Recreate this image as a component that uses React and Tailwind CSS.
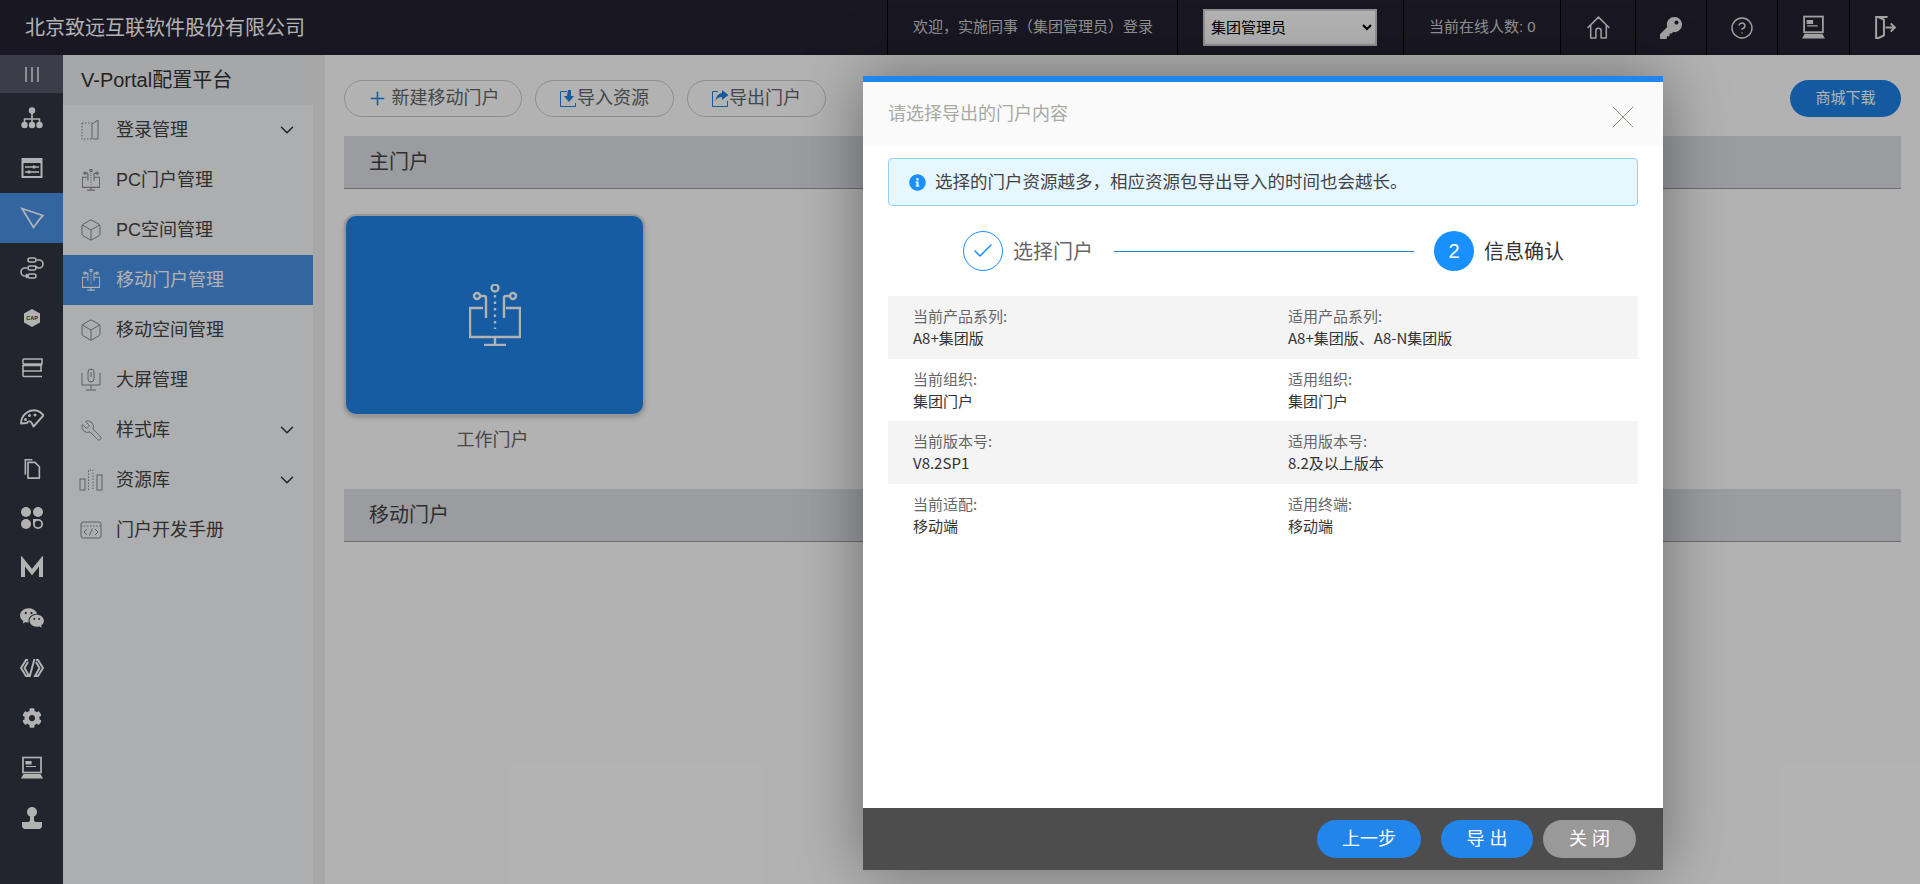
import { Box, ChevronDown, CircleHelp, Check, Plus, Wrench, X } from 'lucide-react'
import { FaCog, FaInfoCircle, FaKey } from 'react-icons/fa'
import { RiWechatFill } from 'react-icons/ri'

const Svg = ({ size = 24, className = '', children, ...rest }) => (
  <svg width={size} height={size} viewBox="0 0 24 24" fill="none" stroke="currentColor" strokeWidth="1.6" className={className} {...rest}>
    {children}
  </svg>
)

const OrgIcon = () => (
  <Svg>
    <circle cx="12" cy="4.5" r="3.2" fill="currentColor" stroke="none" />
    <path d="M12 7v6M4.5 16v-3h15v3M12 13v3" />
    <circle cx="4.5" cy="19" r="3.2" fill="currentColor" stroke="none" />
    <circle cx="12" cy="19" r="3.2" fill="currentColor" stroke="none" />
    <circle cx="19.5" cy="19" r="3.2" fill="currentColor" stroke="none" />
  </Svg>
)

const SliderIcon = () => (
  <Svg>
    <rect x="1.5" y="2" width="21" height="20" fill="currentColor" stroke="none" />
    <rect x="3.5" y="7" width="17" height="13" fill="#313643" stroke="none" />
    <path d="M5 11h14M5 16h14" strokeWidth="1.4" />
    <path d="M14 9.5v3M9 14.5v3" strokeWidth="2.4" />
  </Svg>
)

const PlaneIcon = () => (
  <Svg strokeWidth="1.8">
    <path d="M2 2.5 23 9.500 20.500 12 13.500 21.500z" strokeLinejoin="miter" />
  </Svg>
)

const FlowIcon = () => (
  <Svg>
    <rect x="8" y="2" width="8" height="4" rx="2" />
    <rect x="8" y="10" width="8" height="4" rx="2" />
    <rect x="8" y="18" width="8" height="4" rx="2" />
    <path d="M17 4h2a3.500 3.500 0 0 1 0 8h-1M15 10l3 2M7 12H5a3.500 3.500 0 0 0 0 8h2M6 18l2 2-2 2" />
  </Svg>
)

const CapIcon = () => (
  <Svg>
    <path d="M12 3 20 7.500v9L12 21l-8-4.500v-9z" fill="currentColor" stroke="none" />
    <text x="12" y="14" textAnchor="middle" fontSize="5.500" fontWeight="700" fill="#313643" stroke="none" fontFamily="Liberation Sans">CAP</text>
  </Svg>
)

const BooksIcon = () => (
  <Svg strokeWidth="1.500">
    <path d="M4 3h18v5H4C2.500 8 2.500 3 4 3zM2 9.500h20M3 9.500V15h18V9.500M2 15h20M4 15.500c-1.500 0-1.500 5 0 5h18" />
  </Svg>
)

const GaugeIcon = () => (
  <Svg>
    <path d="M1 17.500C1 9 9 3 16 4.500c3 .6 5.500 2 7.500 5L13.500 20.500 12 17.500c-.5-2.500-4-3-5-.5z" strokeWidth="1.900" strokeLinejoin="round" />
    <circle cx="5.500" cy="13.500" r="1.500" fill="currentColor" stroke="none" />
    <circle cx="9.500" cy="9.500" r="1.500" fill="currentColor" stroke="none" />
    <circle cx="15" cy="9" r="1.500" fill="currentColor" stroke="none" />
  </Svg>
)

const FilesIcon = () => (
  <Svg size={21} strokeWidth="1.900">
    <path d="M5 19V2h8" />
    <path d="M8 5h8l5 5v13H8z" strokeLinejoin="round" />
  </Svg>
)

const CloverIcon = () => (
  <Svg>
    <rect x="1" y="1" width="10" height="10" rx="5" fill="currentColor" stroke="none" />
    <rect x="13" y="1" width="10" height="10" rx="5" fill="currentColor" stroke="none" />
    <rect x="1" y="13" width="10" height="10" rx="5" fill="currentColor" stroke="none" />
    <path d="M13 13h5a5 5 0 1 1-5 5z" fill="currentColor" stroke="none" />
    <circle cx="18" cy="18" r="3.200" fill="#313643" stroke="none" />
  </Svg>
)

const MarkIcon = () => (
  <Svg strokeWidth="4">
    <path d="M3 21V5l9 11 9-11v16" strokeLinejoin="miter" />
  </Svg>
)

const CodeIcon = () => (
  <Svg strokeWidth="2">
    <path d="M8 4H6L1 12l5 8h3l-4.500-8L8 6M16 4h2l5 8-5 8h-3l4.500-8L16 6M14.500 3 9.500 21" />
  </Svg>
)

const LaptopIcon = ({ size = 24 }) => (
  <Svg size={size}>
    <rect x="3" y="1.500" width="18" height="15" strokeWidth="1.700" />
    <path d="M6 5.500h5v2.500H6zM6 10.500h10" fill="currentColor" strokeWidth="1.200" />
    <path d="M3.500 18h17L23 22.500H1z" fill="currentColor" stroke="none" />
  </Svg>
)

const StampIcon = () => (
  <Svg>
    <circle cx="12" cy="6" r="5" fill="currentColor" stroke="none" />
    <path d="M10 9h4v5c0 1 1 2 2 2h6v5l-2 2H4l-2-2v-5h6c1 0 2-1 2-2z" fill="currentColor" stroke="none" />
  </Svg>
)

const HomeIcon = () => (
  <Svg size={25} strokeWidth="1.500">
    <path d="M1.500 12.500 12 2l10.500 10.500M4.500 10v12h5v-7c0-3 5-3 5 0v7h5V10" strokeLinejoin="round" />
  </Svg>
)

const ExitIcon = () => (
  <Svg size={25} strokeWidth="1.900">
    <path d="M14 2H3v20h2.500l5-2.500V4.500L5 2M17 8l4 4-4 4M12 12h9" />
  </Svg>
)

const PortalIcon = ({ size = 18, strokeWidth = 1.600 }) => (
  <svg width={size} height={size * 62 / 52} viewBox="0 0 52 62" fill="none" stroke="currentColor" strokeWidth={strokeWidth * 2}>
    <circle cx="26" cy="4" r="3.500" />
    <circle cx="8" cy="12" r="3" />
    <circle cx="44" cy="12" r="3" />
    <path d="M26 11v34" strokeDasharray="2.500 4" />
    <path d="M11 12h4a2 2 0 0 1 2 2v20M41 12h-4a2 2 0 0 0-2 2v20" />
    <path d="M14 24H1v29h50V24H37M26 53v8M15 61h22" />
  </svg>
)

const DoorIcon = () => (
  <Svg strokeWidth="1">
    <path d="M3 5h10M3 5v16h10" strokeDasharray="1.500 1.500" />
    <path d="M14 21h5V2l-6 4v15" />
  </Svg>
)

const MicIcon = () => (
  <Svg strokeWidth="1">
    <rect x="9" y="1" width="6" height="13" rx="3" />
    <path d="M12 4v5M3 5v12h18V5M12 17v5M7 22h10" />
  </Svg>
)

const BarsIcon = () => (
  <svg width="24" height="24" viewBox="0 0 24 24" fill="none" stroke="currentColor" strokeWidth="1">
    <rect x="1" y="11" width="5" height="11" />
    <path d="M9.500 22V2h4.500v20" strokeDasharray="1.500 1.500" />
    <rect x="18" y="7" width="5" height="15" />
  </svg>
)

const CodeWindowIcon = () => (
  <Svg strokeWidth="1">
    <rect x="2" y="4" width="20" height="16" rx="2" />
    <path d="M2 8h20" strokeDasharray="1.500 1.500" />
    <path d="m8 11-3 3 3 3M16 11l3 3-3 3M13.500 10.500l-3 7" />
  </Svg>
)

const ImportIcon = () => (
  <svg width="17" height="17" viewBox="0 0 17 17" fill="none" className="text-[#1e82e5]">
    <path d="M7 1.500H.500v15h15V13" stroke="currentColor" />
    <path d="M10 0h3v6h3l-5 6-5-6h3z" transform="translate(-2 0)" fill="currentColor" />
  </svg>
)

const ExportIcon = () => (
  <svg width="17" height="17" viewBox="0 0 17 17" fill="none" className="text-[#1e82e5]">
    <path d="M6 1.500H.500v15h15V11" stroke="currentColor" />
    <path d="M10 0l6.500 5-6.500 5V7C7 7 5 8 3.500 11 4 6.500 6.500 3.500 10 3z" fill="currentColor" />
  </svg>
)

const CubeIcon = () => <Box size={24} strokeWidth={1} />

const RAIL = [
  { icon: OrgIcon },
  { icon: SliderIcon },
  { icon: PlaneIcon, active: true },
  { icon: FlowIcon },
  { icon: CapIcon },
  { icon: BooksIcon },
  { icon: GaugeIcon },
  { icon: FilesIcon },
  { icon: CloverIcon },
  { icon: MarkIcon },
  { icon: () => <RiWechatFill size={26} /> },
  { icon: CodeIcon },
  { icon: () => <FaCog size={20} /> },
  { icon: LaptopIcon },
  { icon: StampIcon },
]

const MENU = [
  { label: '登录管理', icon: DoorIcon, more: true },
  { label: 'PC门户管理', icon: PortalIcon },
  { label: 'PC空间管理', icon: CubeIcon },
  { label: '移动门户管理', icon: PortalIcon, active: true },
  { label: '移动空间管理', icon: CubeIcon },
  { label: '大屏管理', icon: MicIcon },
  { label: '样式库', icon: () => <Wrench size={23} strokeWidth={1} className="-scale-x-100" />, more: true },
  { label: '资源库', icon: BarsIcon, more: true },
  { label: '门户开发手册', icon: CodeWindowIcon },
]

const TOP_ICONS = [
  { w: 'w-[75px]', el: <HomeIcon /> },
  { w: 'w-[71px]', el: <FaKey size={22} /> },
  { w: 'w-[71px]', el: <CircleHelp size={24} strokeWidth={1.400} /> },
  { w: 'w-[72px]', el: <LaptopIcon size={25} /> },
  { w: 'w-[71px]', el: <ExitIcon /> },
]

const ROWS = [
  { a: '当前产品系列:', av: 'A8+集团版', b: '适用产品系列:', bv: 'A8+集团版、A8-N集团版' },
  { a: '当前组织:', av: '集团门户', b: '适用组织:', bv: '集团门户' },
  { a: '当前版本号:', av: 'V8.2SP1', b: '适用版本号:', bv: '8.2及以上版本' },
  { a: '当前适配:', av: '移动端', b: '适用终端:', bv: '移动端' },
]

const Section = ({ title }) => (
  <div className="h-[53px] flex items-center pl-[25px] bg-[#dfe0e5] border-b border-[#a09ba2] text-[20px] text-[#444]">{title}</div>
)

export default function App() {
  return (
    <div className="relative h-screen overflow-hidden flex flex-col bg-white [font-family:'Liberation_Sans','Noto_Sans_CJK_SC',sans-serif]">
      <header className="h-[55px] shrink-0 flex items-stretch bg-[#242331] text-white">
        <div className="flex-1 pl-[25px] flex items-center text-[20px]">北京致远互联软件股份有限公司</div>
        <div className="w-[290px] border-l border-black flex items-center pl-[25px] text-[15px] text-[#d0d0d0] whitespace-nowrap">欢迎，实施同事（集团管理员）登录</div>
        <div className="w-[226px] border-l border-black flex items-center pl-[25px]">
          <select className="w-[174px] h-[37px] bg-white border-2 border-[#d0d0d0] text-[15px] text-black pl-[2px]">
            <option>集团管理员</option>
          </select>
        </div>
        <div className="w-[157px] border-l border-black flex items-center pl-[25px] text-[15px] text-[#d0d0d0] whitespace-nowrap">当前在线人数: 0</div>
        {TOP_ICONS.map((t, i) => (
          <div key={i} className={`${t.w} border-l border-black flex items-center justify-center text-[#e8e8e8]`}>{t.el}</div>
        ))}
      </header>

      <div className="flex-1 flex min-h-0">
        <nav className="w-[63px] shrink-0 bg-[#313643] text-white">
          <div className="h-[38px] bg-[#565869] flex items-center justify-center gap-[4px]">
            <span className="w-[2px] h-[15px] bg-white/70" />
            <span className="w-[2px] h-[15px] bg-white/70" />
            <span className="w-[2px] h-[15px] bg-white/70" />
          </div>
          {RAIL.map(({ icon: Icon, active }, i) => (
            <div key={i} className={`h-[50px] flex items-center justify-center ${active ? 'bg-[#4a92e6]' : ''}`}>
              <Icon />
            </div>
          ))}
        </nav>

        <aside className="w-[250px] shrink-0 bg-[#f8f9fc]">
          <div className="h-[50px] bg-[#eeeff2] flex items-center pl-[18px] text-[#333] text-[20px]">V-Portal配置平台</div>
          {MENU.map(({ label, icon: Icon, active, more }) => (
            <div key={label} className={`h-[50px] flex items-center text-[18px] ${active ? 'bg-[#4a92e6] text-white' : 'text-[#444]'}`}>
              <span className={`w-[53px] pl-[16px] ${active ? 'text-white' : 'text-[#8a8a8a]'}`}>
                <span className="w-[24px] flex justify-center"><Icon /></span>
              </span>
              <span className="flex-1">{label}</span>
              {more && <ChevronDown size={22} strokeWidth={1.600} className="mr-[15px] text-[#333]" />}
            </div>
          ))}
        </aside>

        <div className="w-[12px] shrink-0 bg-[#f0f0f0]" />

        <main className="flex-1 min-w-0 pt-[25px] px-[19px]">
          <div className="flex items-center h-[37px] gap-[13px]">
            <button className="w-[178px] h-[37px] rounded-full border border-[#ccc] flex items-center justify-center gap-[4px] text-[18px] text-[#666]">
              <Plus size={21} strokeWidth={1.800} className="text-[#1e82e5]" />新建移动门户
            </button>
            <button className="w-[139px] h-[37px] rounded-full border border-[#ccc] flex items-center justify-center text-[18px] text-[#666]">
              <ImportIcon />导入资源
            </button>
            <button className="w-[139px] h-[37px] rounded-full border border-[#ccc] flex items-center justify-center text-[18px] text-[#666]">
              <ExportIcon />导出门户
            </button>
            <button className="ml-auto w-[111px] h-[37px] rounded-full bg-[#1e82e5] text-white text-[15px]">商城下载</button>
          </div>

          <div className="mt-[19px]"><Section title="主门户" /></div>

          <div className="pt-[27px] pl-[2px] w-[299px] flex flex-col items-center">
            <div className="w-[297px] h-[198px] rounded-[10px] bg-[#1f84e8] flex items-center justify-center text-white shadow-[0_0_0_2px_#d8d8d8,0_2px_6px_rgba(0,0,0,0.35)]">
              <PortalIcon size={52} strokeWidth={1.200} />
            </div>
            <div className="h-[50px] pt-[2px] -ml-[4px] flex items-center text-[18px] text-[#666]">工作门户</div>
          </div>

          <div className="mt-[25px]"><Section title="移动门户" /></div>
        </main>
      </div>

      <div className="absolute inset-0 bg-black/30" />

      <div className="absolute left-[863px] top-[76px] w-[800px] h-[794px] flex flex-col bg-white border-t-[6px] border-[#2185e9] shadow-[0_0_60px_rgba(0,0,0,0.4)]">
        <div className="h-[63px] shrink-0 bg-[#fafafa] flex items-center justify-between pl-[25px] pr-[20px] text-[18px] text-[#a8a99f]">
          <span className="pt-[2px]">请选择导出的门户内容</span>
          <X size={40} strokeWidth={0.600} className="mt-[6px] text-[#8f9378]" />
        </div>

        <div className="flex-1 px-[25px] pt-[13px]">
          <div className="h-[48px] w-[750px] flex items-center gap-[9px] pl-[20px] rounded-[4px] border border-[#91d5ff] bg-[#e6f7ff] text-[17.500px] text-[#444]">
            <FaInfoCircle size={17} className="text-[#1890ff]" />
            选择的门户资源越多，相应资源包导出导入的时间也会越长。
          </div>

          <div className="mt-[25px] ml-[75px] h-[40px] flex items-center">
            <span className="w-[40px] h-[40px] rounded-full border border-[#1890ff] flex items-center justify-center text-[#1890ff]">
              <Check size={24} strokeWidth={1.500} />
            </span>
            <span className="ml-[10px] w-[80px] pt-[2px] text-[20px] text-[#666]">选择门户</span>
            <span className="ml-[21px] w-[300px] h-px bg-[#1f7fd6]" />
            <span className="ml-[20px] w-[40px] h-[40px] rounded-full bg-[#1890ff] flex items-center justify-center text-[20px] text-white">2</span>
            <span className="ml-[10px] pt-[2px] text-[20px] text-[#333]">信息确认</span>
          </div>

          <div className="mt-[25px] w-[750px] [font-family:'Noto_Sans_CJK_SC',sans-serif]">
            {ROWS.map((r, i) => (
              <div key={r.a} className={`h-[62.500px] grid grid-cols-2 content-center text-[15px] leading-[22px] ${i % 2 === 0 ? 'bg-[#f4f4f4]' : ''}`}>
                <div className="pl-[25px] text-[#666]">{r.a}</div>
                <div className="pl-[25px] text-[#666]">{r.b}</div>
                <div className="pl-[25px] text-[#333]">{r.av}</div>
                <div className="pl-[25px] text-[#333]">{r.bv}</div>
              </div>
            ))}
          </div>
        </div>

        <div className="h-[62px] shrink-0 bg-[#4d4d4d] flex items-center justify-end pr-[27px] text-[18px] text-white">
          <button className="w-[104px] h-[38px] rounded-full bg-[#2185e9]">上一步</button>
          <button className="ml-[20px] w-[92px] h-[38px] rounded-full bg-[#2185e9]">导 出</button>
          <button className="ml-[10px] w-[93px] h-[38px] rounded-full bg-[#999]">关 闭</button>
        </div>
      </div>
    </div>
  )
}
